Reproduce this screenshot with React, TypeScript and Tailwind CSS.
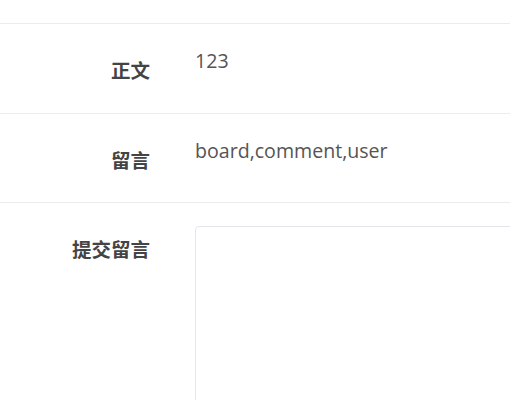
import React from "react";

const rows = [
  { label: "正文", value: "123", h: "h-[90px]" },
  { label: "留言", value: "board,comment,user", h: "h-[89px]" },
];

const font = { fontFamily: '"Open Sans", "Noto Sans CJK SC", sans-serif' };

export default function App() {
  return (
    <div className="w-[510px] h-[400px] overflow-hidden bg-white" style={font}>
      <div className="h-[24px] border-b border-[#ececec]" />
      {rows.map((row) => (
        <div key={row.label} className={`flex ${row.h} border-b border-[#ececec]`}>
          <div className="w-[150px] shrink-0 pt-[32px] text-right text-[19.5px] leading-[30px] font-bold text-[#444]">
            {row.label}
          </div>
          <div className="ml-[45px] pt-[22px] text-[19.6px] leading-[30px] text-[#555]">{row.value}</div>
        </div>
      ))}
      <div className="flex">
        <div className="w-[150px] shrink-0 pt-[32px] text-right text-[19.5px] leading-[30px] font-bold text-[#444]">
          提交留言
        </div>
        <div className="ml-[45px] pt-[23px] flex-1">
          <textarea className="block w-[400px] h-[200px] rounded-tl-[4px] border border-[#e4e6ec] outline-none resize-none" />
        </div>
      </div>
    </div>
  );
}
